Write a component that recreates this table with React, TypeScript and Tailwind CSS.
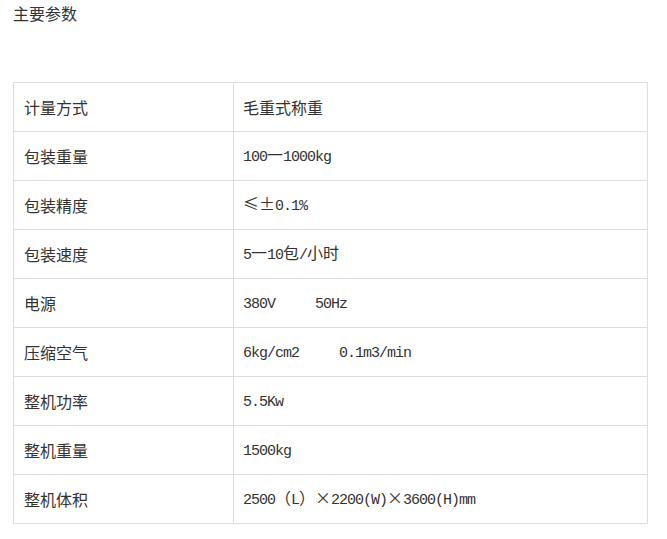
const rows: [string, string][] = [
  ["计量方式", "毛重式称重"],
  ["包装重量", "100一1000kg"],
  ["包装精度", "≤±0.1%"],
  ["包装速度", "5一10包/小时"],
  ["电源", "380V     50Hz"],
  ["压缩空气", "6kg/cm2     0.1m3/min"],
  ["整机功率", "5.5Kw"],
  ["整机重量", "1500kg"],
  ["整机体积", "2500（L）×2200(W)×3600(H)mm"],
];

// half-width runs get a narrow mono face, full-width runs stay CJK
function Value({ text }: { text: string }) {
  const parts = text.match(/[\x20-\x7e]+|[^\x20-\x7e]+/g) ?? [];
  return (
    <span className="whitespace-pre">
      {parts.map((p, i) =>
        /^[\x20-\x7e]+$/.test(p) ? (
          <span
            key={i}
            className="font-['Liberation_Mono',monospace] text-[15px] tracking-[-1px]"
          >
            {p}
          </span>
        ) : (
          <span key={i}>{p}</span>
        )
      )}
    </span>
  );
}

export default function App() {
  return (
    <div className="min-h-[539px] bg-white px-[13px] font-['Noto_Sans_CJK_SC',sans-serif] text-[16px] text-[#333]">
      <p className="pt-[1px] leading-[24px]">主要参数</p>
      <table className="mt-[57px] w-[635px] border-collapse">
        <tbody>
          {rows.map(([label, value]) => (
            <tr key={label} className="h-[49px]">
              <td className="w-[220px] border border-[#ddd] px-[10px] align-middle leading-[24px]">
                {label}
              </td>
              <td className="border border-[#ddd] px-[9px] align-middle leading-[24px]">
                <Value text={value} />
              </td>
            </tr>
          ))}
        </tbody>
      </table>
    </div>
  );
}
